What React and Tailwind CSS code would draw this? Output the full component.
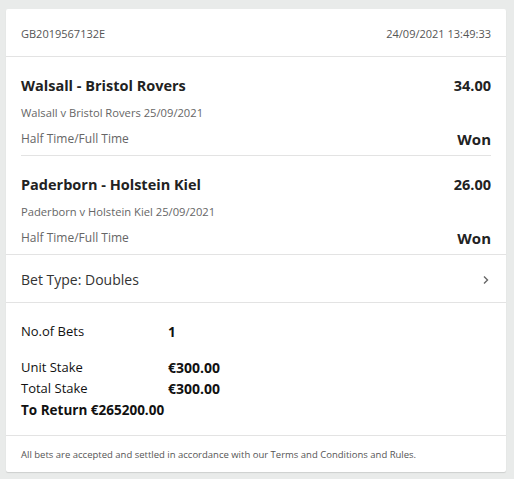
export default function App() {
  const legs = [
    { title: "Walsall - Bristol Rovers", odds: "34.00", sub: "Walsall v Bristol Rovers 25/09/2021", market: "Half Time/Full Time", result: "Won", last: false },
    { title: "Paderborn - Holstein Kiel", odds: "26.00", sub: "Paderborn v Holstein Kiel 25/09/2021", market: "Half Time/Full Time", result: "Won", last: true },
  ];
  return (
    <div className="min-h-[479px] bg-[#e9ebea] pt-[9px] pl-[6px] pr-[8px] pb-[6px]" style={{ fontFamily: '"Open Sans", "Noto Sans", sans-serif' }}>
      <div className="bg-white rounded-[2px] shadow-[0_1px_1px_rgba(0,0,0,0.12)]">
        <div className="h-[48px] flex items-center justify-between px-[15px] pt-[3px] border-b border-[#e3e3e3] text-[11px] text-[#555]">
          <span>GB2019567132E</span>
          <span>24/09/2021 13:49:33</span>
        </div>
        {legs.map((l, i) => (
          <div key={i} className={l.last ? "px-[15px] border-b border-[#e3e3e3]" : "px-[15px]"}>
            <div className={l.last ? "pt-[19px] pb-[6px]" : "pt-[19px] pb-[6px] border-b border-[#e3e3e3]"}>
              <div className="flex justify-between items-center h-[20px] text-[14.5px] font-bold text-[#222]">
                <span>{l.title}</span>
                <span>{l.odds}</span>
              </div>
              <div className="mt-[9px] h-[16px] leading-[16px] text-[11.2px] text-[#666]">{l.sub}</div>
              <div className="mt-[8px] flex justify-between items-center h-[20px]">
                <span className="text-[12px] text-[#666]">{l.market}</span>
                <span className="text-[15px] font-bold text-[#222]">{l.result}</span>
              </div>
            </div>
          </div>
        ))}
        <div className="h-[48px] flex items-center justify-between px-[15px] pt-[2px] border-b border-[#e3e3e3]">
          <span className="text-[14px] text-[#333]">Bet Type: Doubles</span>
          <svg width="8" height="10" viewBox="0 0 8 10" className="mr-[1px]">
            <path d="M2 1.5 L5.5 5 L2 8.5" fill="none" stroke="#666" strokeWidth="1.4" />
          </svg>
        </div>
        <div className="px-[15px] pt-[19px] pb-[14px] text-[13px] text-[#111] border-b border-[#e3e3e3]">
          <div className="flex h-[20px] items-center">
            <span className="w-[147px]">No.of Bets</span>
            <span className="font-bold text-[13.5px]">1</span>
          </div>
          <div className="mt-[15px] flex h-[21px] items-center">
            <span className="w-[147px]">Unit Stake</span>
            <span className="font-bold text-[14px]">€300.00</span>
          </div>
          <div className="flex h-[21px] items-center">
            <span className="w-[147px]">Total Stake</span>
            <span className="font-bold text-[14px]">€300.00</span>
          </div>
          <div className="flex h-[21px] mt-[1px] items-center font-bold text-[13.5px]">
            <span>To Return €265200.00</span>
          </div>
        </div>
        <div className="h-[36px] flex items-center px-[15px] pt-[3px] text-[9.5px] text-[#555]">
          All bets are accepted and settled in accordance with our Terms and Conditions and Rules.
        </div>
      </div>
    </div>
  );
}
